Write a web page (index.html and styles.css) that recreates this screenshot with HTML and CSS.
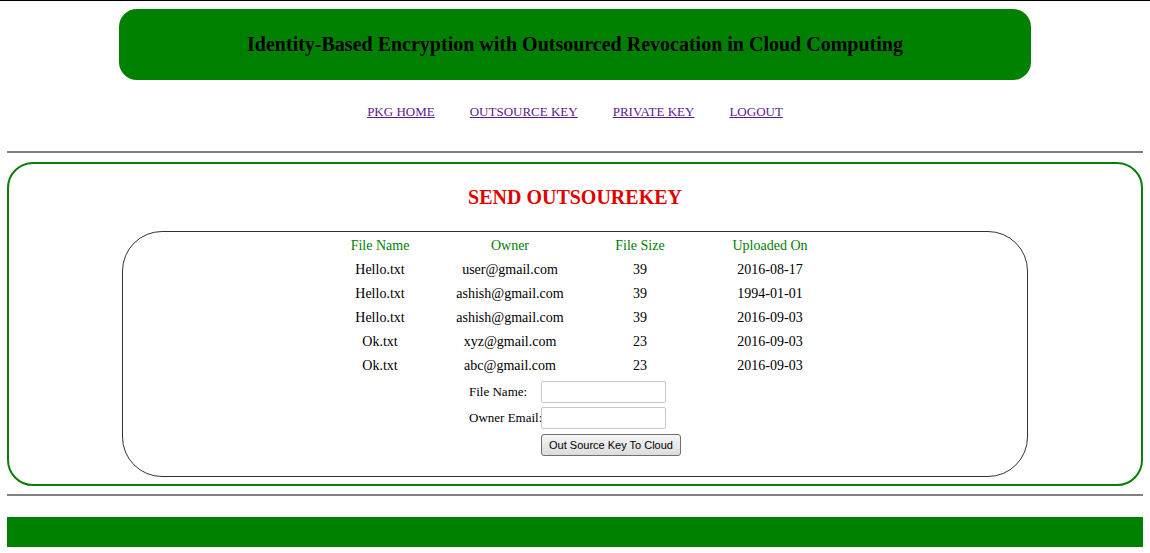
FILE: index.html
```html
<!DOCTYPE html>
<html>
<head>
<meta charset="utf-8">
<title>Send Outsource Key</title>
<link rel="stylesheet" href="styles.css">
</head>
<body>
<div class="page">
  <div class="banner">
    <h1 class="banner-title">Identity-Based Encryption with Outsourced Revocation in Cloud Computing</h1>
  </div>
  <nav class="nav">
    <a href="#" class="nav-link">PKG HOME</a>
    <a href="#" class="nav-link">OUTSOURCE KEY</a>
    <a href="#" class="nav-link">PRIVATE KEY</a>
    <a href="#" class="nav-link">LOGOUT</a>
  </nav>
  <div class="rule rule-top"></div>
  <section class="panel">
    <h2 class="panel-title">SEND OUTSOUREKEY</h2>
    <div class="inner">
      <table class="files">
        <thead>
          <tr><th>File Name</th><th>Owner</th><th>File Size</th><th>Uploaded On</th></tr>
        </thead>
        <tbody>
          <tr><td>Hello.txt</td><td>user@gmail.com</td><td>39</td><td>2016-08-17</td></tr>
          <tr><td>Hello.txt</td><td>ashish@gmail.com</td><td>39</td><td>1994-01-01</td></tr>
          <tr><td>Hello.txt</td><td>ashish@gmail.com</td><td>39</td><td>2016-09-03</td></tr>
          <tr><td>Ok.txt</td><td>xyz@gmail.com</td><td>23</td><td>2016-09-03</td></tr>
          <tr><td>Ok.txt</td><td>abc@gmail.com</td><td>23</td><td>2016-09-03</td></tr>
        </tbody>
      </table>
      <form class="form">
        <div class="form-row">
          <label class="form-label">File Name:</label>
          <input class="form-input" type="text">
        </div>
        <div class="form-row">
          <label class="form-label">Owner Email:</label>
          <input class="form-input" type="text">
        </div>
        <div class="form-row form-row-btn">
          <span class="form-label"></span>
          <button type="button" class="form-btn">Out Source Key To Cloud</button>
        </div>
      </form>
    </div>
  </section>
  <div class="rule rule-bottom"></div>
  <footer class="footer"></footer>
</div>
</body>
</html>
```

FILE: styles.css
```css
html, body {
  margin: 0;
  padding: 0;
  background: #fff;
}
body {
  border-top: 1px solid #000;
  font-family: "Liberation Serif", "Times New Roman", serif;
  color: #000;
}
.page {
  padding: 0 7px;
}
.banner {
  width: 912px;
  height: 71px;
  margin: 8px auto 0;
  background: #008000;
  border-radius: 18px;
  display: flex;
  align-items: center;
  justify-content: center;
}
.banner-title {
  margin: 0;
  font-size: 20px;
  font-weight: bold;
  color: #000;
}
.nav {
  margin-top: 20px;
  height: 24px;
  display: flex;
  justify-content: center;
  align-items: center;
  gap: 35px;
}
.nav-link {
  font-size: 13px;
  color: #551a8b;
  text-decoration: underline;
}
.rule {
  height: 0;
  border-top: 2px solid #808080;
}
.rule-top {
  margin-top: 27px;
}
.panel {
  margin-top: 9px;
  border: 2px solid #0a7d0a;
  border-radius: 26px;
  padding: 0 0 7px;
}
.panel-title {
  margin: 18px 0 19px;
  height: 30px;
  line-height: 30px;
  text-align: center;
  font-size: 20px;
  font-weight: bold;
  color: #e00000;
}
.inner {
  width: 80%;
  margin: 0 auto;
  border: 1px solid #333;
  border-radius: 40px;
  padding: 2px 0 20px;
  box-sizing: border-box;
}
.files {
  margin: 0 auto;
  border-collapse: collapse;
  table-layout: fixed;
  width: 520px;
}
.files th, .files td {
  width: 130px;
  height: 24px;
  padding: 0;
  text-align: center;
  font-size: 14px;
  font-weight: normal;
}
.files th {
  color: #008000;
}
.form {
  width: 212px;
  margin: 3px auto 0;
  display: flex;
  flex-direction: column;
  gap: 4px;
}
.form-row {
  display: flex;
  align-items: center;
  height: 22px;
}
.form-row-btn {
  margin-top: 1px;
}
.form-label {
  width: 72px;
  flex: none;
  font-size: 13px;
  white-space: nowrap;
}
.form-input {
  width: 125px;
  height: 22px;
  box-sizing: border-box;
  margin: 0;
  border: 1px solid #c8c8c8;
  border-radius: 2px;
  padding: 0 3px;
  flex: none;
}
.form-btn {
  width: 140px;
  height: 22px;
  box-sizing: border-box;
  flex: none;
  margin: 0;
  padding: 0;
  font-family: "Liberation Sans", Arial, sans-serif;
  font-size: 11px;
  color: #000;
  background: linear-gradient(#f6f6f6, #dcdcdc);
  border: 1px solid #707070;
  border-radius: 3px;
}
.rule-bottom {
  margin-top: 8px;
}
.footer {
  margin-top: 21px;
  height: 30px;
  background: #008000;
}
```
